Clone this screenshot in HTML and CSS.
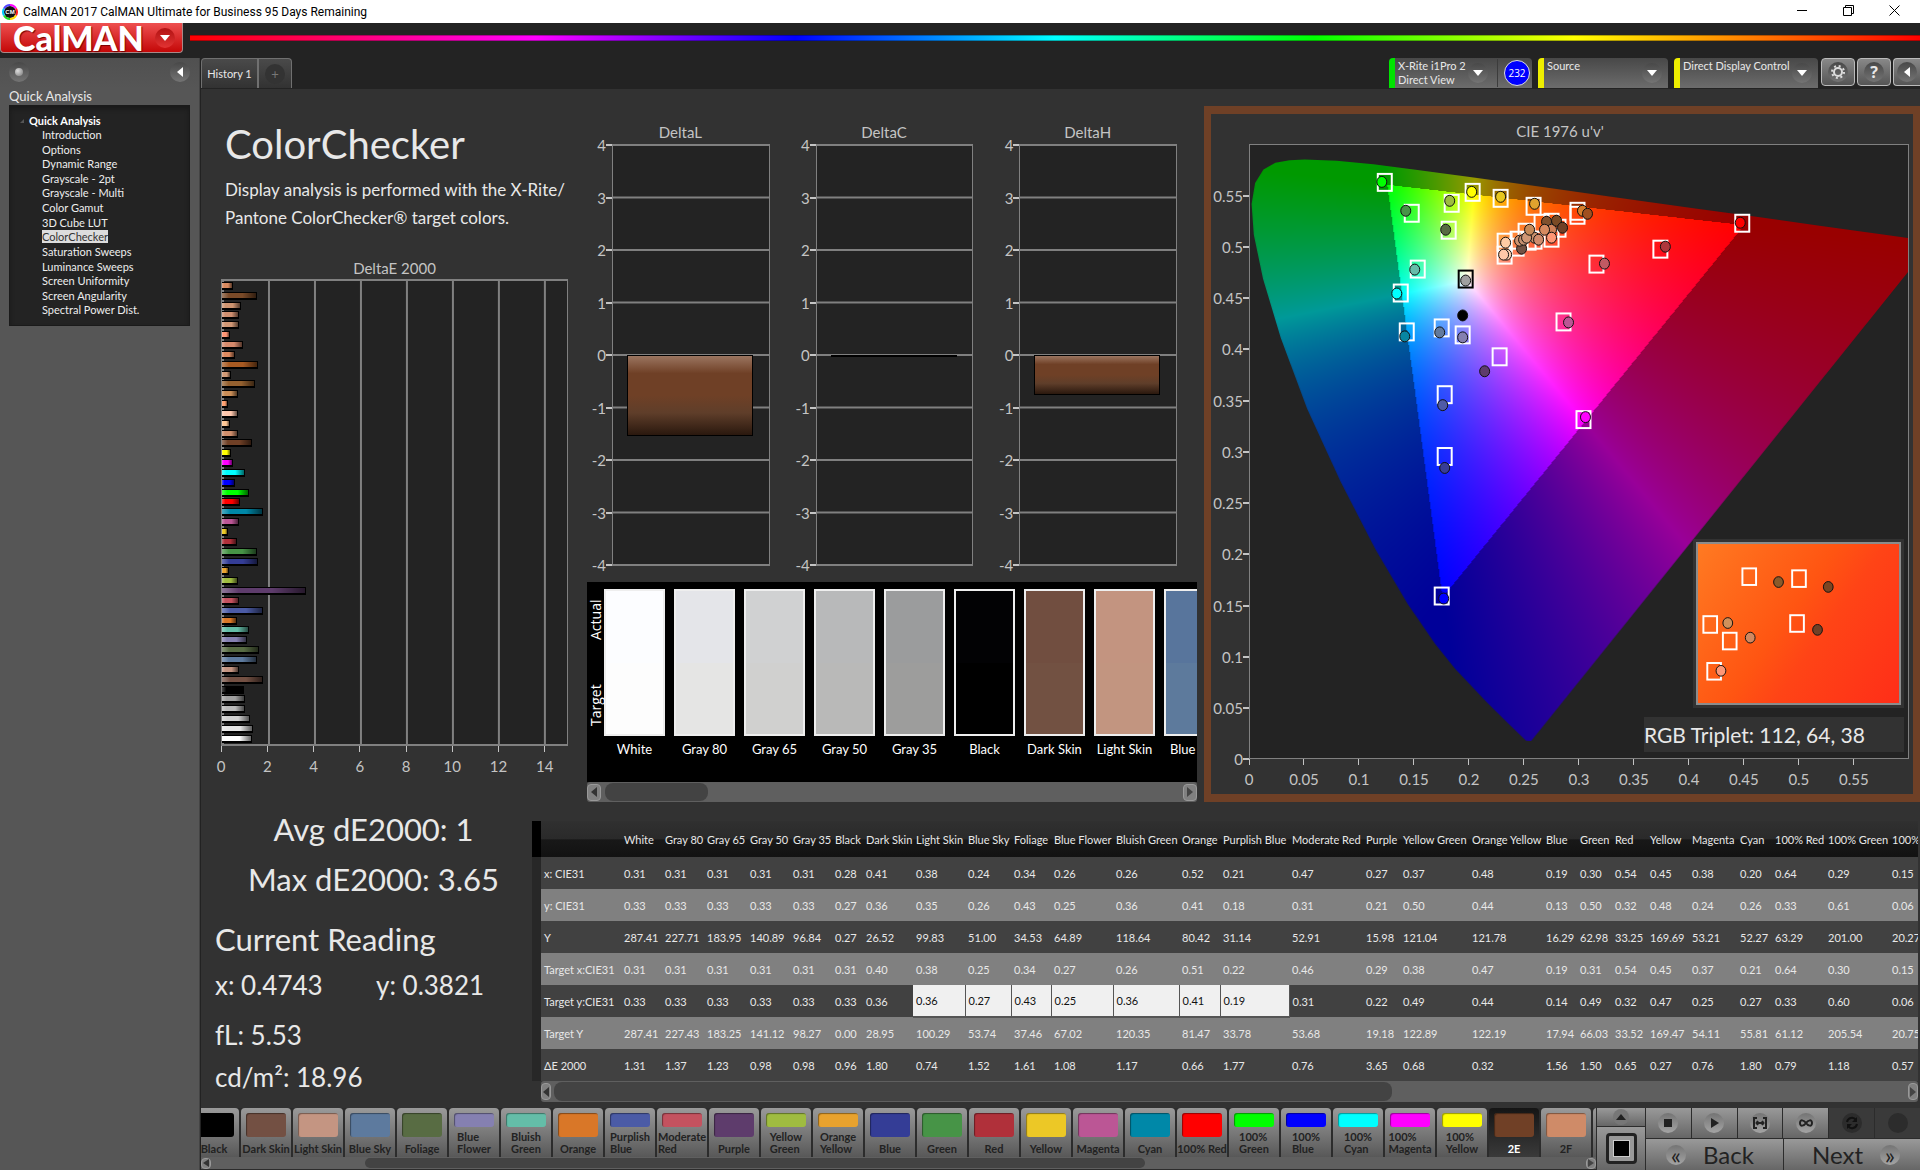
FILE: index.html
```html
<!DOCTYPE html>
<html lang="en">
<head>
    <meta charset="UTF-8">
    <meta name="viewport" content="width=device-width, initial-scale=1.0">
    <title>CalMAN 2017</title>
    <link rel="stylesheet" href="styles.css">
</head>
<body>
    <div class="titlebar">
        <svg class="app-icon" viewBox="0 0 16 16">
            <circle cx="8" cy="8" r="6" fill="#111"/>
            <g fill="none" stroke-width="2">
                <path d="M8 1a7 7 0 0 1 6 3.500" stroke="#f0f"/>
                <path d="M14 4.500a7 7 0 0 1 0 7" stroke="#f22"/>
                <path d="M14 11.500a7 7 0 0 1-6 3.500" stroke="#fd0"/>
                <path d="M8 15a7 7 0 0 1-6-3.500" stroke="#2d2"/>
                <path d="M2 11.500a7 7 0 0 1 0-7" stroke="#0cf"/>
                <path d="M2 4.500a7 7 0 0 1 6-3.500" stroke="#54f"/>
            </g>
            <text x="8" y="10" text-anchor="middle">CM</text>
        </svg>
        <span class="window-title">CalMAN 2017 CalMAN Ultimate for Business 95 Days Remaining</span>
        <div class="window-buttons">
            <button type="button" aria-label="Minimize"><svg viewBox="0 0 11 11"><path d="M0 5.500h10"/></svg></button>
            <button type="button" aria-label="Restore"><svg viewBox="0 0 11 11"><path d="M.5 2.500h8v8h-8zM2.500 2.500v-2h8v8h-2"/></svg></button>
            <button type="button" aria-label="Close"><svg viewBox="0 0 11 11"><path d="M.5.5l10 10M10.500.5l-10 10"/></svg></button>
        </div>
    </div>

    <header class="header">
        <button type="button" class="logo">CalMAN <span class="round round-red"><i class="down"></i></span></button>
        <div class="rainbow"></div>
    </header>

    <div class="workspace">
        <aside class="sidebar">
            <div class="sidebar-top">
                <button type="button" class="round" aria-label="Pin"><i class="dot"></i></button>
                <button type="button" class="round" aria-label="Collapse"><i class="left"></i></button>
            </div>
            <div class="sidebar-title">Quick Analysis</div>
            <nav class="tree">
                <div class="tree-root"><i class="corner"></i>Quick Analysis</div>
                <ul>
                    <li><a href="#">Introduction</a></li>
                    <li><a href="#">Options</a></li>
                    <li><a href="#">Dynamic Range</a></li>
                    <li><a href="#">Grayscale - 2pt</a></li>
                    <li><a href="#">Grayscale - Multi</a></li>
                    <li><a href="#">Color Gamut</a></li>
                    <li><a href="#">3D Cube LUT</a></li>
                    <li><a href="#" class="active">ColorChecker</a></li>
                    <li><a href="#">Saturation Sweeps</a></li>
                    <li><a href="#">Luminance Sweeps</a></li>
                    <li><a href="#">Screen Uniformity</a></li>
                    <li><a href="#">Screen Angularity</a></li>
                    <li><a href="#">Spectral Power Dist.</a></li>
                </ul>
            </nav>
        </aside>

        <main class="main">
            <div class="toolbar">
                <div class="tabs">
                    <button type="button" class="tab">History 1</button>
                    <button type="button" class="tab tab-add" aria-label="Add history"><span class="round">+</span></button>
                </div>
                <div class="devices">
                    <button type="button" class="device device-meter">
                        <span class="device-name">X-Rite i1Pro 2<br>Direct View</span>
                        <span class="round"><i class="down"></i></span>
                        <span class="count"><b>232</b></span>
                    </button>
                    <button type="button" class="device device-source">
                        <span class="device-name">Source</span>
                        <span class="round"><i class="down"></i></span>
                    </button>
                    <button type="button" class="device device-display">
                        <span class="device-name">Direct Display Control</span>
                        <span class="round"><i class="down"></i></span>
                    </button>
                    <button type="button" class="tool" aria-label="Settings"><span class="round"><svg viewBox="0 0 16 16" width="16" height="16"><circle cx="8" cy="8" r="4" fill="none" stroke="#ddd" stroke-width="2"/><circle cx="8" cy="8" r="6" fill="none" stroke="#ddd" stroke-width="2" stroke-dasharray="2 2.710"/></svg></span></button>
                    <button type="button" class="tool" aria-label="Help"><span class="round help">?</span></button>
                    <button type="button" class="tool tool-last" aria-label="Collapse toolbar"><span class="round"><i class="left"></i></span></button>
                </div>
            </div>

            <div class="page">
                <section class="top">
                    <div class="col-left">
                        <h1>ColorChecker</h1>
                        <p class="intro">Display analysis is performed with the X-Rite/<br>Pantone ColorChecker® target colors.</p>
                        <div class="de-chart">
                            <h2>DeltaE 2000</h2>
                            <div class="de-plot" id="deBars"></div>
                            <div class="x-axis">
                                <span>0</span><span>2</span><span>4</span><span>6</span><span>8</span><span>10</span><span>12</span><span>14</span>
                            </div>
                        </div>
                    </div>

                    <div class="col-mid">
                        <div class="deltas" id="deltas"></div>
                        <div class="strip">
                            <div class="strip-side"><span>Actual</span><span>Target</span></div>
                            <div class="strip-list" id="strip"></div>
                        </div>
                        <div class="scroll scroll-strip">
                            <button type="button" aria-label="Scroll left"><i class="left"></i></button>
                            <div class="track"><div class="thumb"></div></div>
                            <button type="button" aria-label="Scroll right"><i class="right"></i></button>
                        </div>
                    </div>

                    <div class="cie">
                        <h2>CIE 1976 u'v'</h2>
                        <div class="cie-body">
                            <div class="cie-y">
                                <span>0.55</span><span>0.5</span><span>0.45</span><span>0.4</span><span>0.35</span><span>0.3</span><span>0.25</span><span>0.2</span><span>0.15</span><span>0.1</span><span>0.05</span><span>0</span>
                            </div>
                            <div class="cie-plot">
                                <canvas id="gamut" width="657" height="613"></canvas>
                                <svg id="points" viewBox="0 0 659 615" preserveAspectRatio="none"></svg>
                                <div class="inset"><svg id="insetPoints" viewBox="0 0 205 163"></svg></div>
                                <div class="triplet">RGB Triplet: 112, 64, 38</div>
                            </div>
                            <div class="x-axis cie-x">
                                <span>0</span><span>0.05</span><span>0.1</span><span>0.15</span><span>0.2</span><span>0.25</span><span>0.3</span><span>0.35</span><span>0.4</span><span>0.45</span><span>0.5</span><span>0.55</span>
                            </div>
                        </div>
                    </div>
                </section>

                <section class="bottom">
                    <div class="readings">
                        <div class="big center">Avg dE2000: 1</div>
                        <div class="big center">Max dE2000: 3.65</div>
                        <div class="big current">Current Reading</div>
                        <div class="reading pair"><span>x: 0.4743</span><span>y: 0.3821</span></div>
                        <div class="reading fl">fL: 5.53</div>
                        <div class="reading">cd/m²: 18.96</div>
                    </div>
                    <div class="data">
                        <table id="data"></table>
                        <div class="scroll scroll-data">
                            <button type="button" aria-label="Scroll left"><i class="left"></i></button>
                            <div class="track"><div class="thumb"></div></div>
                            <button type="button" aria-label="Scroll right"><i class="right"></i></button>
                        </div>
                    </div>
                </section>
            </div>

            <footer class="footer">
                <div class="patches">
                    <div class="patch-list" id="patches"></div>
                    <div class="scroll scroll-patches">
                        <button type="button" aria-label="Scroll left"><i class="left"></i></button>
                        <div class="track"><div class="thumb"></div></div>
                        <button type="button" aria-label="Scroll right"><i class="right"></i></button>
                    </div>
                </div>
                <div class="pattern">
                    <button type="button" aria-label="Expand"><span class="round"><i class="up"></i></span></button>
                    <button type="button" aria-label="Pattern window"><span class="window-shape"><i></i></span></button>
                </div>
                <div class="controls">
                    <div class="transport">
                        <button type="button" aria-label="Stop"><span class="round"><svg viewBox="0 0 16 16"><path d="M4 4h8v8H4z" fill="#222"/></svg></span></button>
                        <button type="button" aria-label="Play"><span class="round"><svg viewBox="0 0 16 16"><path d="M5 3l8 5-8 5z" fill="#222"/></svg></span></button>
                        <button type="button" aria-label="Read series"><span class="round"><svg viewBox="0 0 16 16"><path d="M5 3H2v10h3M11 3h3v10h-3M5 8h6M6 6L4.500 8 6 10M10 6l1.500 2L10 10" fill="none" stroke="#222" stroke-width="2"/></svg></span></button>
                        <button type="button" aria-label="Read continuous"><span class="round"><svg viewBox="0 0 16 16"><path d="M8 8C6 5 2 4 2 8s4 3 6 0 6-4 6 0-4 3-6 0z" fill="none" stroke="#222" stroke-width="2"/></svg></span></button>
                        <button type="button" class="off" aria-label="Refresh"><span class="round"><svg viewBox="0 0 16 16"><path d="M3 7a5 5 0 0 1 9-2M13 9a5 5 0 0 1-9 2" fill="none" stroke="#111" stroke-width="2"/><path d="M13 2v5H8zM3 14V9h5z" fill="#111"/></svg></span></button>
                        <button type="button" class="off" aria-label="Record"><span class="round"></span></button>
                    </div>
                    <div class="steps">
                        <button type="button"><span class="round">«</span>Back</button>
                        <button type="button" class="next">Next<span class="round">»</span></button>
                    </div>
                </div>
            </footer>
        </main>
    </div>
    <script src="script.js"></script>
</body>
</html>
```
FILE: styles.css
```css
* {
    box-sizing: border-box;
}
body {
    margin: 0;
    min-height: 100vh;
    display: flex;
    flex-direction: column;
    background: #232323;
    color: #e8e8e8;
    font-family: Lato, sans-serif;
    font-size: 11px;
    overflow: hidden;
}
button {
    font: inherit;
    color: inherit;
    border: none;
    padding: 0;
    background: none;
    white-space: nowrap;
}
h1, h2, p, ul {
    margin: 0;
    padding: 0;
    font-weight: normal;
}
h2 {
    font-size: 15px;
    line-height: 20px;
    text-align: center;
    color: #c4c4c4;
}

/* small arrows and round knobs */
.down, .up, .left, .right {
    display: block;
    width: 0;
    height: 0;
    border: 5px solid transparent;
}
.down {
    border-top: 6px solid #fff;
    border-bottom: none;
}
.up {
    border-bottom: 6px solid #222;
    border-top: none;
}
.left {
    border-right: 6px solid #fff;
    border-left: none;
}
.right {
    border-left: 6px solid #444;
    border-right: none;
}
.round {
    display: flex;
    justify-content: center;
    align-items: center;
    flex: none;
    width: 20px;
    height: 20px;
    border-radius: 50%;
    background: linear-gradient(#484848, #747474);
}
.round-red {
    background: linear-gradient(#b01212, #e23333);
}
.dot {
    width: 8px;
    height: 8px;
    border-radius: 50%;
    background: radial-gradient(circle at 35% 35%, #ddd, #777);
}

/* window frame */
.titlebar {
    display: flex;
    align-items: center;
    height: 23px;
    background: #fff;
    color: #000;
}
.app-icon {
    width: 16px;
    height: 16px;
    margin: 0 5px 0 2px;
}
.app-icon text {
    font: bold 6px "Liberation Sans", sans-serif;
    fill: #fff;
}
.window-title {
    font-family: Roboto, sans-serif;
    font-size: 12px;
    line-height: 22px;
}
.window-buttons {
    display: flex;
    margin-left: auto;
    padding-right: 3px;
}
.window-buttons button {
    width: 46px;
    height: 22px;
}
.window-buttons svg {
    width: 11px;
    height: 11px;
    fill: none;
    stroke: #000;
}
.header {
    display: flex;
    height: 35px;
}
.logo {
    display: flex;
    justify-content: space-between;
    align-items: center;
    width: 183px;
    height: 30px;
    padding: 0 7px 0 12px;
    background: linear-gradient(#ee5050, #c40808);
    border: 1px solid #a88;
    border-top: none;
    border-radius: 0 0 4px 4px;
    color: #fff;
    font-weight: 900;
    font-size: 34px;
    line-height: 28px;
    text-shadow: 1px 1px 1px #700;
}
.rainbow {
    flex: 1;
    height: 6px;
    margin: 12px 0 0 7px;
    border: 1px solid rgba(0, 0, 0, 0.3);
    border-width: 1px 0;
    background: linear-gradient(to right, #f00, #f0f 20%, #00f 35%, #0ff 50%, #0f0 65%, #ff0 80%, #f00);
}
.workspace {
    display: flex;
    flex: 1;
}

/* sidebar */
.sidebar {
    width: 200px;
    padding: 4px 9px;
    background: linear-gradient(#505050, #565656 30px);
    border-right: 1px solid #444;
}
.sidebar-top {
    display: flex;
    justify-content: space-between;
}
.sidebar-title {
    margin-top: 5px;
    font-size: 13px;
    line-height: 18px;
}
.tree {
    height: 221px;
    padding: 8px 0 0 19px;
    background: #232323;
    border: 1px solid #1a1a1a;
    box-shadow: inset 0 3px 4px #1a1a1a;
}
.tree-root {
    display: flex;
    align-items: center;
    font-weight: bold;
    line-height: 14px;
    color: #fff;
}
.corner {
    border: 2px solid #555;
    border-top-color: transparent;
    border-left-color: transparent;
    margin: 0 5px 0 -9px;
}
.tree ul {
    display: grid;
    height: 190px;
    padding-left: 13px;
    list-style: none;
}
.tree li {
    line-height: 14px;
}
.tree a {
    color: #eee;
    text-decoration: none;
}
.tree .active {
    background: #ddd;
    color: #333;
}

/* main column */
.main {
    display: flex;
    flex-direction: column;
    flex: 1;
    min-width: 0;
    border-left: 1px solid #222;
}
.toolbar {
    display: flex;
    justify-content: space-between;
    height: 31px;
    background: #232323;
}
.tabs, .devices {
    display: flex;
}
.tab {
    width: 57px;
    height: 30px;
    background: linear-gradient(#4a4a4a, #323232);
    border: 1px solid #707070;
    border-bottom: none;
    border-radius: 4px 0 0 0;
}
.tab-add {
    display: flex;
    justify-content: center;
    align-items: center;
    width: 34px;
    border-radius: 0 4px 0 0;
}
.tab-add .round {
    background: #333;
    color: #777;
    font-size: 13px;
}
.device {
    display: flex;
    align-items: center;
    width: 130px;
    height: 30px;
    margin-right: 6px;
    padding-right: 6px;
    background: linear-gradient(#484848, #6c6c6c);
    border-left: 6px solid #ee0;
    border-radius: 4px 4px 0 0;
    text-align: left;
}
.device-name {
    flex: 1;
    min-width: 0;
    align-self: flex-start;
    padding: 1px 0 0 3px;
    line-height: 14px;
}
.device-meter {
    width: 143px;
    padding-right: 2px;
    border-left-color: #00e400;
}
.device-display {
    width: 144px;
    margin-right: 3px;
}
.count {
    height: 28px;
    margin-left: 9px;
    padding-left: 6px;
    border-left: 1px solid #3c3c3c;
}
.count b {
    display: block;
    width: 26px;
    height: 26px;
    margin-top: 1px;
    border: 1px solid #ddd;
    border-radius: 50%;
    background: #00f;
    font: 10px/24px "Open Sans", sans-serif;
    text-align: center;
    color: #fff;
}
.tool {
    display: flex;
    justify-content: center;
    align-items: center;
    width: 34px;
    height: 28px;
    margin-right: 2px;
    background: linear-gradient(#888, #555);
    border: 1px solid #bbb;
    border-radius: 4px;
}
.tool-last {
    width: 27px;
    margin-right: 0;
    border-right: none;
    border-radius: 4px 0 0 4px;
}
.help {
    font: bold 16px "Open Sans", sans-serif;
}
.page {
    flex: 1;
    background: #323232;
}
.top {
    display: grid;
    grid-template-columns: 377fr 626fr 716fr;
}
.col-left {
    padding-top: 27px;
    min-width: 0;
}
h1 {
    padding-left: 24px;
    font-size: 40px;
    line-height: 56px;
}
.intro {
    padding: 4px 0 26px 24px;
    font-size: 17px;
    line-height: 28px;
    white-space: nowrap;
}
.de-chart {
    margin: 0 10px 0 20px;
}
.de-plot {
    display: flex;
    flex-direction: column;
    justify-content: space-around;
    height: 467px;
    margin-top: 1px;
    background: #232323 linear-gradient(to right, #808080 2px, transparent 2px) 0 0 / 13.333% 100%;
    border: 2px solid #808080;
    border-width: 2px 1px;
}
.de-plot div {
    height: 8px;
    border: 1px solid #000;
    border-width: 1px 1px 2px 0;
    background-image: linear-gradient(to right, rgba(255, 255, 255, 0.3), transparent 20%, transparent 60%, rgba(0, 0, 0, 0.6));
}
.x-axis {
    display: flex;
    height: 31px;
    font-size: 15px;
    line-height: 20px;
    color: #c4c4c4;
}
.x-axis span {
    flex: 0 0 13.333%;
    text-align: center;
}
.x-axis span:first-child {
    margin-left: -6.666%;
}
.x-axis span::before {
    content: "";
    display: block;
    width: 1px;
    height: 6px;
    margin: 0 auto 4px;
    background: #c4c4c4;
}

/* delta charts */
.col-mid {
    min-width: 0;
    padding: 33px 7px 0 9px;
}
.deltas {
    display: grid;
    grid-template-columns: 1fr 1fr 1fr;
    gap: 21px;
    margin: 0 20px 16px 0;
}
.deltas h2 {
    padding-left: 4px;
}
.delta-body {
    display: flex;
    margin-top: 2px;
}
.delta-y {
    display: flex;
    flex-direction: column;
    justify-content: space-between;
    width: 25px;
    margin: -9px 0;
    font-size: 15px;
    line-height: 20px;
    color: #c4c4c4;
}
.delta-y span, .cie-y span {
    display: flex;
    align-items: center;
    justify-content: flex-end;
}
.delta-y span::after, .cie-y span::after {
    content: "";
    width: 6px;
    height: 2px;
    background: #c4c4c4;
}
.delta-plot {
    flex: 1;
    height: 422px;
    padding-left: 14px;
    background: #232323 linear-gradient(#808080 2px, transparent 2px) 0 0 / 100% 12.5%;
    border: 1px solid #808080;
    border-width: 0 1px 2px;
}
.delta-plot div {
    width: 126px;
    margin-top: 211px;
    border: 1px solid #000;
    background: linear-gradient(#9b7560, #6f4026 22%, #6f4026 50%, #5f3e2a 72%, #2a180e);
}

/* swatches */
.strip {
    display: flex;
    height: 200px;
    overflow: hidden;
    background: #000;
}
.strip-side {
    display: flex;
    justify-content: space-between;
    width: 17px;
    height: 126px;
    margin-top: 18px;
    flex: none;
    writing-mode: vertical-rl;
    transform: rotate(180deg);
    flex-direction: row-reverse;
    font: 14px/17px "Open Sans", sans-serif;
    color: #fff;
}
.strip-list {
    display: flex;
    gap: 9px;
    padding-top: 7px;
}
.swatch {
    flex: 0 0 61px;
    min-width: 0;
    font-size: 13px;
    line-height: 26px;
    text-align: center;
    white-space: nowrap;
    color: #fff;
}
.swatch div {
    height: 147px;
    border: 2px solid #eee;
}
.scroll {
    display: flex;
    align-items: center;
    height: 20px;
    background: #5f5f5f;
    border-radius: 3px;
}
.scroll button {
    display: flex;
    justify-content: center;
    align-items: center;
    width: 14px;
    height: 17px;
    background: #808080;
    border: 1px solid #999;
    border-radius: 4px;
}
.scroll .left {
    border-right-color: #333;
}
.track {
    flex: 1;
    height: 100%;
    padding: 1px 4px;
}
.thumb {
    height: 100%;
    background: #434343;
    border-radius: 8px;
}
.scroll-strip .thumb {
    width: 18%;
}

/* chromaticity diagram */
.cie {
    min-width: 0;
    margin-top: 17px;
    padding: 7px 4px 0 0;
    border: 8px solid #6f4026;
    border-width: 8px 7px;
}
.cie-body {
    display: grid;
    grid-template-columns: 38px 1fr;
    margin-top: 3px;
}
.cie-y {
    display: grid;
    height: 615px;
    margin: 26px 0 -26px;
    font-size: 15px;
    line-height: 20px;
    color: #c4c4c4;
}
.cie-plot {
    position: relative;
    height: 615px;
    background: #232323;
    border: 1px solid #808080;
}
.cie-plot canvas, .cie-plot > svg {
    position: absolute;
    left: 0;
    top: 0;
    width: 100%;
    height: 100%;
}
.cie-x {
    grid-column: 2;
    height: 35px;
}
.cie-x span {
    flex-basis: 8.333%;
}
.cie-x span:first-child {
    margin-left: -4.166%;
}
.inset {
    position: absolute;
    right: 4px;
    bottom: 50px;
    padding: 3px;
    background: #323232;
}
.inset svg {
    display: block;
    width: 205px;
    height: 163px;
    border: 2px solid #8c8c8c;
    background: linear-gradient(125deg, #ff7a22, #ff5512 45%, #ff4416 60%, #ff2e18);
}
.triplet {
    position: absolute;
    right: 4px;
    bottom: 6px;
    width: 260px;
    background: #323232;
    font-size: 21px;
    line-height: 35px;
    white-space: nowrap;
}

/* readings and data table */
.bottom {
    display: grid;
    grid-template-columns: 331fr 1388fr;
    padding-top: 2px;
}
.readings {
    padding-left: 14px;
    white-space: nowrap;
}
.big {
    font-size: 31px;
    line-height: 50px;
}
.center {
    text-align: center;
}
.current {
    margin-top: 10px;
}
.reading {
    font-size: 26px;
    line-height: 42px;
}
.pair {
    display: grid;
    grid-template-columns: 161px 1fr;
}
.fl {
    margin-top: 8px;
}
.data {
    min-width: 0;
    margin: 17px 2px 0 0;
    overflow: hidden;
}
table {
    width: 1413px;
    table-layout: fixed;
    border-collapse: collapse;
}
th, td {
    height: 32px;
    padding: 0 0 0 3px;
    font-weight: normal;
    text-align: left;
    white-space: nowrap;
}
thead th {
    height: 36px;
    background: linear-gradient(#303030, #2a2a2a 50%, #181818 52%, #121212);
}
tbody tr {
    background: #414141;
}
tbody tr:nth-child(even) {
    background: #808080;
}
.grip, thead .grip {
    background: #272727;
}
thead .grip {
    background: #000;
}
td.selected {
    background: #f0f0f0;
    color: #111;
    border: 1px solid #555;
    border-width: 0 1px 2px 0;
}
.scroll-data {
    height: 21px;
    margin-left: 9px;
}
.scroll-data button {
    width: 10px;
}
.scroll-data .track {
    padding: 1px 3px;
}
.scroll-data .thumb {
    width: 62%;
}

/* footer */
.footer {
    display: flex;
    height: 62px;
    background: #2c2c2c;
}
.patches {
    flex: 1;
    min-width: 0;
    overflow: hidden;
}
.patch-list {
    display: flex;
    gap: 2px;
    height: 49px;
    margin-left: -12px;
}
.patch {
    display: flex;
    flex-direction: column;
    align-items: center;
    justify-content: space-between;
    flex: 0 0 50px;
    min-width: 0;
    padding: 5px 0 2px;
    background: linear-gradient(#9a9a9a, #585858);
    border-radius: 4px 4px 0 0;
    color: #222;
    font-weight: bold;
    font-size: 11px;
    line-height: 12px;
    text-align: left;
}
.patch i {
    flex: 1;
    width: 40px;
    max-height: 24px;
    margin-bottom: 4px;
    border-radius: 3px;
    box-shadow: inset 1px 1px 1px rgba(0, 0, 0, 0.4);
}
.patch.current-patch {
    background: linear-gradient(#151515, #3a3a3a);
    color: #fff;
}
.scroll-patches {
    height: 12px;
    border-radius: 0;
}
.scroll-patches button {
    width: 10px;
    height: 11px;
}
.scroll-patches .left, .scroll-patches .right {
    border-top-width: 4px;
    border-bottom-width: 4px;
}
.scroll-patches .thumb {
    width: 57%;
    margin-left: 11%;
}
.pattern {
    display: grid;
    grid-template-rows: 18px 43px;
    gap: 1px;
    width: 48px;
    margin-left: 1px;
}
.pattern button, .transport button, .steps button {
    display: flex;
    justify-content: center;
    align-items: center;
    background: linear-gradient(#999, #666);
    color: #222;
}
.pattern .round {
    width: 16px;
    height: 16px;
    background: #777;
}
.window-shape {
    display: flex;
    justify-content: center;
    align-items: center;
    width: 31px;
    height: 31px;
    border: 3px solid #222;
    border-radius: 4px;
    background: #999;
}
.window-shape i {
    width: 15px;
    height: 15px;
    background: #000;
    outline: 1px solid #ccc;
}
.controls {
    display: grid;
    grid-template-rows: 30px 31px;
    gap: 1px;
    width: 274px;
    margin-left: 1px;
}
.transport {
    display: grid;
    grid-template-columns: repeat(6, 1fr);
    gap: 1px;
}
.transport svg {
    width: 16px;
    height: 16px;
}
.transport .round, .steps .round {
    background: linear-gradient(#747474, #a4a4a4);
}
.transport .off {
    background: #3a3a3a;
}
.transport .off .round {
    background: #2c2c2c;
}
.steps {
    display: grid;
    grid-template-columns: 1fr 1fr;
    gap: 1px;
}
.steps button {
    justify-content: flex-start;
    gap: 17px;
    padding: 0 20px;
    font-size: 24px;
}
.steps .next {
    justify-content: flex-end;
}
```
FILE: script.js
```js
var names = ["White", "Gray 80", "Gray 65", "Gray 50", "Gray 35", "Black", "Dark Skin", "Light Skin", "Blue Sky", "Foliage", "Blue Flower", "Bluish Green", "Orange", "Purplish Blue", "Moderate Red", "Purple", "Yellow Green", "Orange Yellow", "Blue", "Green", "Red", "Yellow", "Magenta", "Cyan", "100% Red", "100% Green", "100% Blue"];
var columns = [41, 42, 43, 43, 42, 31, 50, 52, 46, 40, 62, 66, 41, 69, 74, 37, 69, 74, 34, 35, 35, 42, 48, 35, 53, 64, 64];
var rows = [
    ["x: CIE31", "0.31 0.31 0.31 0.31 0.31 0.28 0.41 0.38 0.24 0.34 0.26 0.26 0.52 0.21 0.47 0.27 0.37 0.48 0.19 0.30 0.54 0.45 0.38 0.20 0.64 0.29 0.15"],
    ["y: CIE31", "0.33 0.33 0.33 0.33 0.33 0.27 0.36 0.35 0.26 0.43 0.25 0.36 0.41 0.18 0.31 0.21 0.50 0.44 0.13 0.50 0.32 0.48 0.24 0.26 0.33 0.61 0.06"],
    ["Y", "287.41 227.71 183.95 140.89 96.84 0.27 26.52 99.83 51.00 34.53 64.89 118.64 80.42 31.14 52.91 15.98 121.04 121.78 16.29 62.98 33.25 169.69 53.21 52.27 63.29 201.00 20.27"],
    ["Target x:CIE31", "0.31 0.31 0.31 0.31 0.31 0.31 0.40 0.38 0.25 0.34 0.27 0.26 0.51 0.22 0.46 0.29 0.38 0.47 0.19 0.31 0.54 0.45 0.37 0.21 0.64 0.30 0.15"],
    ["Target y:CIE31", "0.33 0.33 0.33 0.33 0.33 0.33 0.36 0.36 0.27 0.43 0.25 0.36 0.41 0.19 0.31 0.22 0.49 0.44 0.14 0.49 0.32 0.47 0.25 0.27 0.33 0.60 0.06"],
    ["Target Y", "287.41 227.43 183.25 141.12 98.27 0.00 28.95 100.29 53.74 37.46 67.02 120.35 81.47 33.78 53.68 19.18 122.89 122.19 17.94 66.03 33.52 169.47 54.11 55.81 61.12 205.54 20.75"],
    ["ΔE 2000", "1.31 1.37 1.23 0.98 0.98 0.96 1.80 0.74 1.52 1.61 1.08 1.17 0.66 1.77 0.76 3.65 0.68 0.32 1.56 1.50 0.65 0.27 0.76 1.80 0.79 1.18 0.57"]
];

// data table
var html = '<colgroup><col style="width:9px"><col style="width:80px">';
columns.forEach(function (w) { html += '<col style="width:' + w + 'px">'; });
html += '</colgroup><thead><tr><th class="grip"></th><th></th>';
names.forEach(function (n) { html += '<th scope="col">' + n + '</th>'; });
html += '</tr></thead><tbody>';
rows.forEach(function (row, r) {
    html += '<tr><td class="grip"></td><th scope="row">' + row[0] + '</th>';
    row[1].split(" ").forEach(function (v, c) {
        html += (r == 4 && c > 6 && c < 14 ? '<td class="selected">' : '<td>') + v + '</td>';
    });
    html += '</tr>';
});
document.getElementById("data").innerHTML = html + '</tbody>';

// DeltaE bars, top to bottom
var bars = [
    [0.5, "#d88a60"], [1.5, "#7a4a28"], [0.81, "#cf9470"], [0.76, "#cf8f70"], [0.76, "#d09775"], [0.33, "#ff9675"],
    [0.9, "#d68a6c"], [0.58, "#de8a60"], [1.55, "#a85a22"], [0.37, "#d29a76"], [1.42, "#94602f"], [0.68, "#c98d57"],
    [0.28, "#ffa070"], [0.68, "#ffc8ae"], [0.33, "#ffc796"], [0.68, "#cf8e6c"], [1.29, "#704026"], [0.37, "#ffff00"],
    [0.46, "#ff00ff"], [0.98, "#00ffff"], [0.57, "#0000ff"], [1.18, "#00ff00"], [0.79, "#ff0000"], [1.8, "#0088a8"],
    [0.76, "#bb5695"], [0.27, "#ecc826"], [0.65, "#b0303a"], [1.5, "#479447"], [1.56, "#343d96"], [0.32, "#e8a22e"],
    [0.68, "#9fbc40"], [3.65, "#5e3c6c"], [0.76, "#c4525f"], [1.77, "#4b5ba6"], [0.66, "#d97728"], [1.17, "#64bda8"],
    [1.08, "#8580b1"], [1.61, "#586c43"], [1.52, "#5d7a9e"], [0.74, "#c49582"], [1.8, "#735043"], [0.96, "#000000"],
    [0.98, "#a0a0a0"], [0.98, "#bababa"], [1.23, "#d0d0d0"], [1.37, "#e6e6e6"], [1.31, "#ffffff"]
];
document.getElementById("deBars").innerHTML = bars.map(function (b) {
    return '<div style="width:' + (b[0] / 15 * 100).toFixed(2) + '%;background-color:' + b[1] + '"></div>';
}).join("");

// DeltaL, DeltaC, DeltaH
var deltas = [["DeltaL", 1.55], ["DeltaC", 0.04], ["DeltaH", 0.77]];
document.getElementById("deltas").innerHTML = deltas.map(function (d) {
    var labels = "";
    for (var i = 4; i >= -4; i--) labels += '<span>' + i + '</span>';
    return '<div><h2>' + d[0] + '</h2><div class="delta-body"><div class="delta-y">' + labels +
        '</div><div class="delta-plot"><div style="height:' + Math.round(d[1] * 52.5) + 'px"></div></div></div></div>';
}).join("");

// actual / target swatches
var swatches = [["White", "#fcfdff", "#fdfdfd"], ["Gray 80", "#e4e5e9", "#e5e5e4"], ["Gray 65", "#d0d1d2", "#d0d0cf"], ["Gray 50", "#b8b9ba", "#b9b9b8"], ["Gray 35", "#9b9c9d", "#9d9d9c"], ["Black", "#020204", "#000"], ["Dark Skin", "#714e40", "#725142"], ["Light Skin", "#c39480", "#c29580"], ["Blue Sky", "#58759c", "#5d7a9c"]];
document.getElementById("strip").innerHTML = swatches.map(function (s) {
    return '<div class="swatch"><div style="background:linear-gradient(' + s[1] + ' 50%,' + s[2] + ' 50%)"></div>' + s[0] + '</div>';
}).join("");

// patch buttons
var patches = [["Black", "#000"], ["Dark Skin", "#735043"], ["Light Skin", "#c49582"], ["Blue Sky", "#5d7a9e"], ["Foliage", "#586c43"], ["Blue<br>Flower", "#8580b1"], ["Bluish<br>Green", "#64bda8"], ["Orange", "#d97728"], ["Purplish<br>Blue", "#4b5ba6"], ["Moderate<br>Red", "#c4525f"], ["Purple", "#5e3c6c"], ["Yellow<br>Green", "#9fbc40"], ["Orange<br>Yellow", "#e8a22e"], ["Blue", "#343d96"], ["Green", "#479447"], ["Red", "#b0303a"], ["Yellow", "#ecc826"], ["Magenta", "#bb5695"], ["Cyan", "#0088a8"], ["100% Red", "#f00"], ["100%<br>Green", "#0f0"], ["100%<br>Blue", "#00f"], ["100%<br>Cyan", "#0ff"], ["100%<br>Magenta", "#f0f"], ["100%<br>Yellow", "#ff0"], ["2E", "#704026"], ["2F", "#cf8b68"], ["", "#888"]];
document.getElementById("patches").innerHTML = patches.map(function (p) {
    return '<button type="button" class="patch' + (p[0] == "2E" ? ' current-patch' : '') + '"><i style="background-color:' + p[1] + '"></i><span>' + p[0] + '</span></button>';
}).join("");

// chromaticity points, in plot units
var targets = [[135, 37], [162, 68], [202, 58], [223, 47], [251, 53], [284, 61], [328, 66], [328, 70], [493, 78], [199, 85], [168, 124], [151, 148], [157, 187], [192, 183], [213, 190], [250, 212], [195, 250], [195, 312], [334, 275], [314, 177], [347, 119], [411, 104], [192, 452], [255, 97], [255, 110], [268, 95], [267, 102], [276, 87], [285, 95], [302, 93], [292, 78], [302, 77], [309, 83], [279, 96]];
var actuals = [[132, 37, "#0f0"], [156, 66, "#479447"], [200, 56, "#9dbc40"], [222, 47, "#ff0"], [251, 52, "#e7c71f"], [285, 59, "#e0a32e"], [333, 66, "#d67e2c"], [338, 69, "#a05020"], [491, 78, "#f00"], [196, 85, "#576c43"], [165, 125, "#67bdaa"], [147, 149, "#0ff"], [216, 136, "#a0a0a0"], [213, 171, "#000"], [155, 192, "#0885a1"], [190, 188, "#627a9d"], [213, 193, "#8580b1"], [235, 227, "#5e3c6c"], [193, 261, "#505ba6"], [195, 324, "#383d96"], [336, 273, "#f0f"], [319, 178, "#bb5695"], [355, 119, "#c15a63"], [416, 102, "#af363c"], [194, 455, "#00f"], [257, 110, "#ffd0b0"], [254, 110, "#ffc8a8"], [256, 98, "#ffcba5"], [272, 104, "#735244"], [270, 96, "#cf9470"], [274, 95, "#c69070"], [285, 93, "#c9906a"], [277, 93, "#d09775"], [280, 85, "#c68a58"], [289, 95, "#cf8b6b"], [297, 77, "#80512e"], [302, 85, "#d0825a"], [295, 85, "#d68a60"], [302, 93, "#ff9675"], [307, 76, "#7a4a25"], [313, 83, "#704026"]];
function box(p, color) {
    return '<rect x="' + (p[0] - 7) + '" y="' + (p[1] - 8) + '" width="14" height="17" fill="none" stroke="' + color + '" stroke-width="2"/>';
}
function dot(p) {
    return '<ellipse cx="' + p[0] + '" cy="' + p[1] + '" rx="5" ry="5.5" fill="' + p[2] + '" stroke="#111"/>';
}
function white(p) { return box(p, "#fff"); }
document.getElementById("points").innerHTML = targets.map(white).join("") + box([216, 134], "#000") + actuals.map(dot).join("");
document.getElementById("insetPoints").innerHTML =
    [[52, 33], [103, 35], [12, 82], [32, 99], [101, 81], [16, 130]].map(white).join("") +
    [[82, 39, "#8a5a2a"], [133, 44, "#7a4522"], [30, 81, "#d0905a"], [53, 96, "#d08860"], [122, 88, "#704026"], [23, 130, "#ff9675"]].map(dot).join("");

// u'v' diagram: full colour inside Rec.709, 60% outside of it
var locus = [[.1741, .005], [.1714, .0051], [.1644, .0109], [.1566, .0177], [.144, .0297], [.1355, .0399], [.1241, .0578], [.1096, .0868], [.0913, .1327], [.0687, .2007], [.0454, .295], [.0235, .4127], [.0082, .5384], [.0039, .6548], [.0139, .7502], [.0389, .812], [.0743, .8338], [.1142, .8262], [.1547, .8059], [.2296, .7543], [.3016, .6923], [.3731, .6245], [.4441, .5547], [.5125, .4866], [.5752, .4242], [.627, .3725], [.6658, .334], [.6915, .3083], [.719, .2809], [.7347, .2653]];
var canvas = document.getElementById("gamut");
var ctx = canvas.getContext("2d");
var W = canvas.width, H = canvas.height, MAX = 0.601;

function colorAt(u, v) {
    var d = 6 * u - 16 * v + 12;
    var x = 9 * u / d, y = 4 * v / d, z = 1 - x - y;
    var rgb = [3.2406 * x - 1.5372 * y - 0.4986 * z, -0.9689 * x + 1.8758 * y + 0.0415 * z, 0.0557 * x - 0.204 * y + 1.057 * z];
    var inside = Math.min(rgb[0], rgb[1], rgb[2]) >= 0;
    var top = Math.max(rgb[0], rgb[1], rgb[2]);
    return rgb.map(function (c) {
        return Math.max(c, 0) / top * 255 * (inside ? 1 : 0.6);
    });
}

var layer = document.createElement("canvas");
layer.width = W;
layer.height = H;
var image = ctx.createImageData(W, H);
for (var py = 0; py < H; py++) {
    for (var px = 0; px < W; px++) {
        var c = colorAt(px / W * MAX, (H - py) / H * MAX);
        var i = (py * W + px) * 4;
        image.data[i] = c[0];
        image.data[i + 1] = c[1];
        image.data[i + 2] = c[2];
        image.data[i + 3] = 255;
    }
}
layer.getContext("2d").putImageData(image, 0, 0);

ctx.beginPath();
locus.forEach(function (p) {
    var d = -2 * p[0] + 12 * p[1] + 3;
    ctx.lineTo(4 * p[0] / d / MAX * W, H - 9 * p[1] / d / MAX * H);
});
ctx.closePath();
ctx.clip();
ctx.drawImage(layer, 0, 0);
```
